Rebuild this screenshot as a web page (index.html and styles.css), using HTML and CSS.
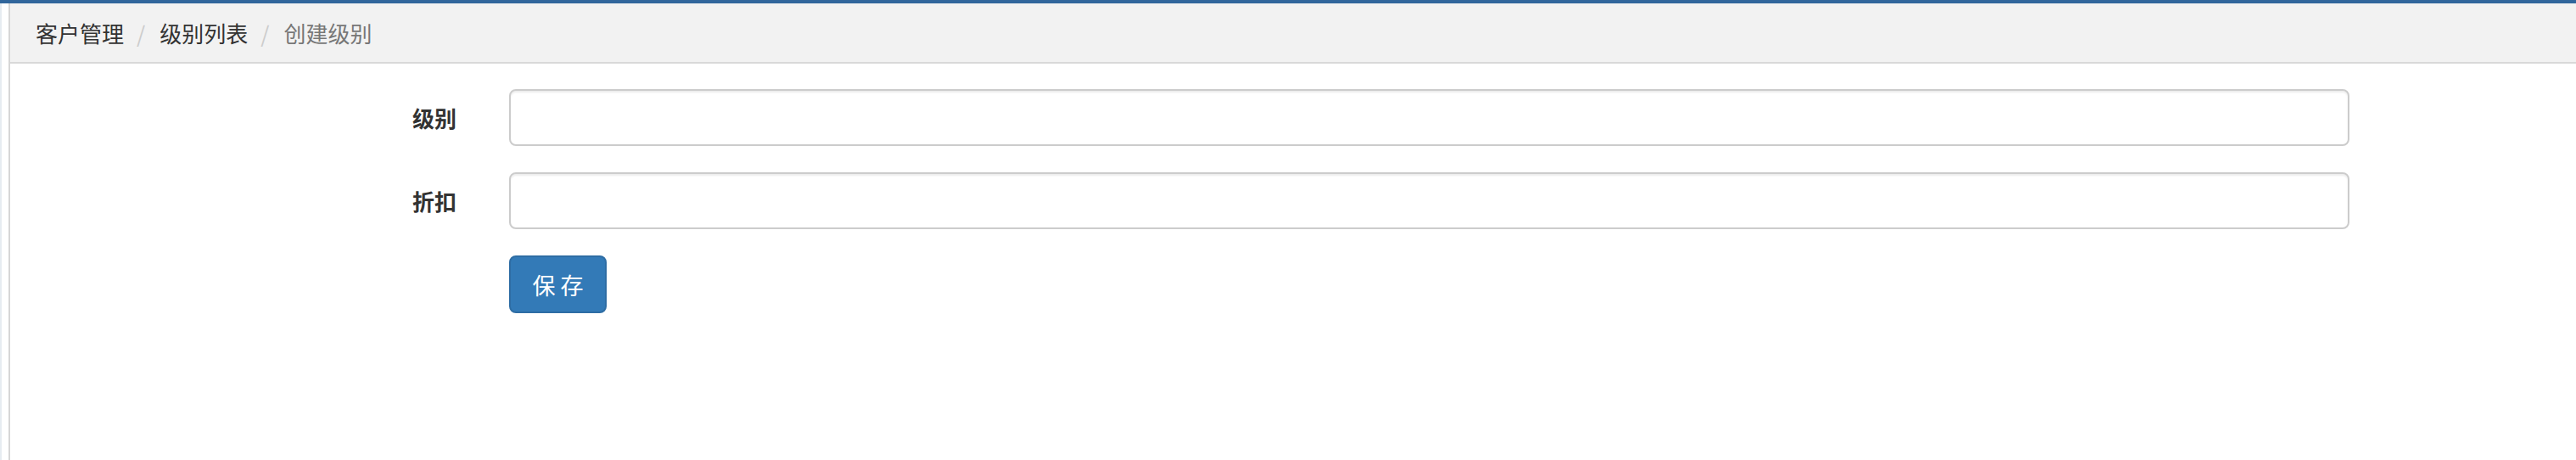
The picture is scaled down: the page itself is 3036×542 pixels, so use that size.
FILE: index.html
```html
<!DOCTYPE html>
<html lang="zh-CN">
<head>
<meta charset="utf-8">
<title>创建级别</title>
<link rel="stylesheet" href="styles.css">
</head>
<body>
<div class="topbar"></div>
<div class="layout">
  <div class="side-strip"></div>
  <div class="side-gap"></div>
  <div class="main">
    <nav class="breadcrumb">
      <span class="crumb">客户管理</span>
      <span class="sep">/</span>
      <span class="crumb">级别列表</span>
      <span class="sep">/</span>
      <span class="crumb active">创建级别</span>
    </nav>
    <form class="form">
      <div class="form-row">
        <label class="form-label">级别</label>
        <input class="form-input" type="text">
      </div>
      <div class="form-row">
        <label class="form-label">折扣</label>
        <input class="form-input" type="text">
      </div>
      <div class="form-row">
        <div class="form-label"></div>
        <button class="btn-primary" type="button">保 存</button>
      </div>
    </form>
  </div>
</div>
</body>
</html>
```

FILE: styles.css
```css
html, body {
  margin: 0;
  padding: 0;
  height: 100%;
  background: #ffffff;
  font-family: "Noto Sans CJK SC", "Noto Sans", sans-serif;
  color: #333333;
}

.topbar {
  height: 4px;
  background: #31669c;
}

.layout {
  display: flex;
  height: 538px;
}

.side-strip {
  width: 2px;
  background: #e6ecf1;
}

.side-gap {
  width: 8px;
  background: #ffffff;
}

.main {
  flex: 1;
  border-left: 2px solid #d6d6d6;
}

.breadcrumb {
  height: 69px;
  background: #f2f2f2;
  border-bottom: 2px solid #d9d9d9;
  display: flex;
  align-items: center;
  padding-left: 30px;
  font-size: 26px;
  line-height: 1;
}

.crumb {
  color: #333333;
}

.crumb.active {
  color: #777777;
}

.sep {
  color: #cccccc;
  padding: 0 17px 0 15px;
}

.form {
  padding-top: 30px;
  display: flex;
  flex-direction: column;
  gap: 31px;
}

.form-row {
  display: flex;
  align-items: center;
}

.form-label {
  width: 526px;
  padding-right: 62px;
  text-align: right;
  font-size: 26px;
  font-weight: bold;
  color: #333333;
}

.form-input {
  width: 2169px;
  height: 67px;
  box-sizing: border-box;
  border: 2px solid #cccccc;
  border-radius: 8px;
  box-shadow: inset 0 2px 2px rgba(0, 0, 0, 0.075);
  background: #ffffff;
  margin: 0;
  padding: 12px 24px;
  font-size: 26px;
  font-family: inherit;
}

.btn-primary {
  width: 115px;
  height: 68px;
  box-sizing: border-box;
  background: #337ab7;
  border: 2px solid #2e6da4;
  border-radius: 8px;
  color: #ffffff;
  font-size: 27px;
  font-family: inherit;
  padding: 0;
  margin: 0;
  cursor: pointer;
}
```
